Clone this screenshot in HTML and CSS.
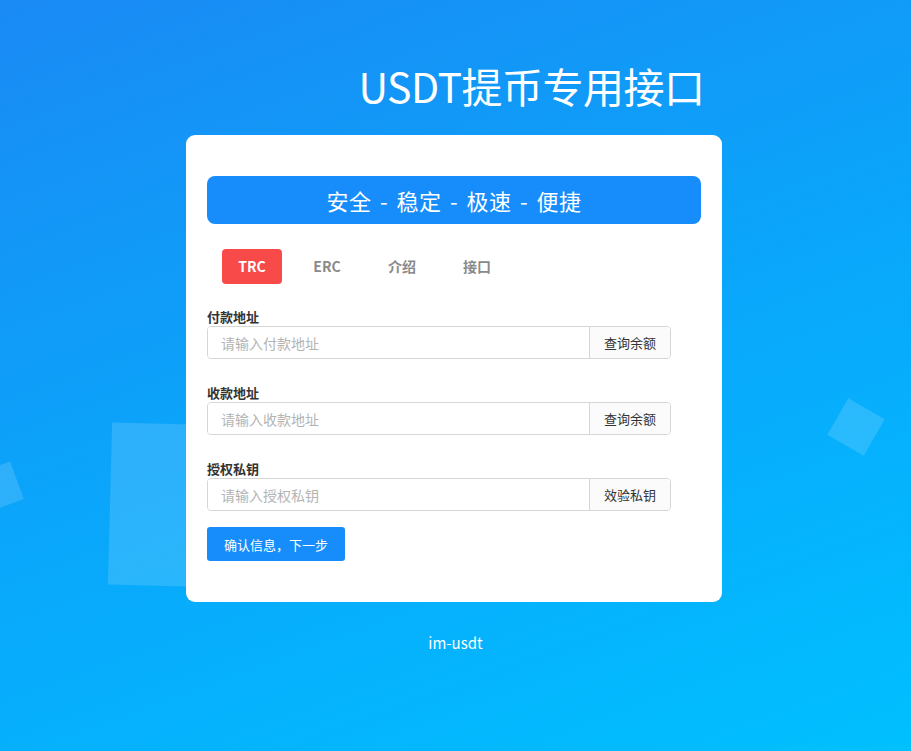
FILE: index.html
```html
<!DOCTYPE html>
<html lang="zh-CN">
<head>
<meta charset="utf-8">
<title>USDT提币专用接口</title>
<link rel="stylesheet" href="styles.css">
</head>
<body>
<div class="bg">
  <div class="shape shape-left-big"></div>
  <div class="shape shape-left-small"></div>
  <div class="shape shape-right"></div>
</div>
<main class="page">
  <h1 class="title">USDT提币专用接口</h1>
  <section class="card">
    <div class="banner">安全 - 稳定 - 极速 - 便捷</div>
    <nav class="tabs">
      <span class="tab active">TRC</span>
      <span class="tab">ERC</span>
      <span class="tab">介绍</span>
      <span class="tab">接口</span>
    </nav>
    <div class="field">
      <label class="label">付款地址</label>
      <div class="group">
        <input class="input" placeholder="请输入付款地址">
        <button class="addon">查询余额</button>
      </div>
    </div>
    <div class="field">
      <label class="label">收款地址</label>
      <div class="group">
        <input class="input" placeholder="请输入收款地址">
        <button class="addon">查询余额</button>
      </div>
    </div>
    <div class="field field-last">
      <label class="label">授权私钥</label>
      <div class="group">
        <input class="input" placeholder="请输入授权私钥">
        <button class="addon">效验私钥</button>
      </div>
    </div>
    <button class="submit">确认信息，下一步</button>
  </section>
  <footer class="footer">im-usdt</footer>
</main>
</body>
</html>
```

FILE: styles.css
```css
* { box-sizing: border-box; }
html, body { margin: 0; padding: 0; height: 100%; }
body {
  font-family: "Noto Sans CJK SC", "Noto Sans", sans-serif;
  background: linear-gradient(160deg, #1a8af4 0%, #0aa6fb 50%, #00c0ff 100%);
  min-height: 751px;
  overflow: hidden;
  position: relative;
}
.bg { position: absolute; inset: 0; pointer-events: none; }
.shape { position: absolute; background: rgba(255,255,255,0.14); }
.shape-left-big {
  left: 110px; top: 424px; width: 120px; height: 162px;
  transform: rotate(1.5deg);
}
.shape-left-small {
  left: -16px; top: 466px; width: 34px; height: 40px;
  transform: rotate(-20deg);
}
.shape-right {
  left: 835px; top: 406px; width: 42px; height: 42px;
  transform: rotate(30deg);
}
.page {
  position: relative;
  display: flex;
  flex-direction: column;
  align-items: center;
  padding-top: 58px;
}
.title {
  margin: 0 0 0 152px;
  font-size: 41px;
  line-height: 54px;
  font-weight: 400;
  color: #fff;
  letter-spacing: -0.5px;
  height: 77px;
}
.card {
  width: 536px;
  margin-right: 3px;
  background: #fff;
  border-radius: 9px;
  padding: 41px 21px 41px 21px;
}
.banner {
  height: 48px;
  width: 494px;
  background: #168dfb;
  border-radius: 8px;
  color: #fff;
  font-size: 22px;
  line-height: 48px;
  text-align: center;
  word-spacing: 3px;
  letter-spacing: 0.5px;
}
.tabs {
  display: flex;
  gap: 15px;
  padding-left: 15px;
  margin-top: 25px;
  margin-bottom: 24px;
}
.tab {
  width: 60px;
  height: 35px;
  line-height: 35px;
  text-align: center;
  font-size: 14px;
  font-weight: 700;
  color: #8a8a8a;
  border-radius: 4px;
}
.tab.active { background: #f94a4a; color: #fff; }
.field { margin-bottom: 25px; }
.field-last { margin-bottom: 16px; }
.label {
  display: block;
  font-size: 13px;
  font-weight: 700;
  color: #333;
  line-height: 18px;
}
.group {
  display: flex;
  width: 464px;
  height: 33px;
  border: 1px solid #d6d6d6;
  border-radius: 4px;
  overflow: hidden;
}
.input {
  flex: 1;
  border: 0;
  outline: none;
  padding: 0 13px;
  font-family: inherit;
  font-size: 14px;
  color: #333;
  background: #fff;
}
.input::placeholder { color: #b4b4b4; }
.addon {
  width: 81px;
  border: 0;
  border-left: 1px solid #d6d6d6;
  background: #fbfbfb;
  font-family: inherit;
  font-size: 13px;
  color: #333;
  padding: 0;
}
.submit {
  display: block;
  width: 138px;
  height: 34px;
  border: 0;
  border-radius: 3px;
  background: #168dfb;
  color: #fff;
  font-family: inherit;
  font-size: 13px;
  padding: 0;
}
.footer {
  margin-top: 30px;
  color: #fff;
  font-size: 15px;
  line-height: 22px;
}
```
